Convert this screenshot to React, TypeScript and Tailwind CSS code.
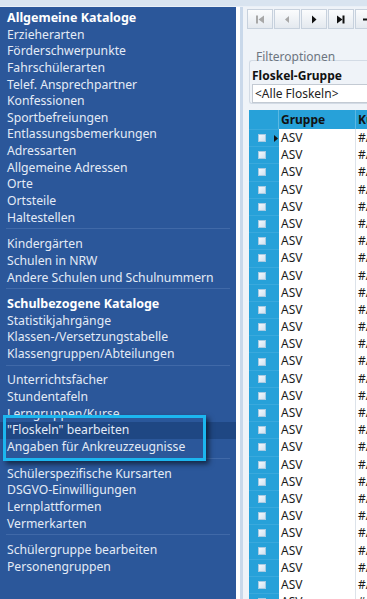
import React from 'react';

type Item = { t: string; b?: boolean; sel?: boolean };

const groups: Item[][] = [
  [
    { t: 'Allgemeine Kataloge', b: true },
    { t: 'Erzieherarten' },
    { t: 'Förderschwerpunkte' },
    { t: 'Fahrschülerarten' },
    { t: 'Telef. Ansprechpartner' },
    { t: 'Konfessionen' },
    { t: 'Sportbefreiungen' },
    { t: 'Entlassungsbemerkungen' },
    { t: 'Adressarten' },
    { t: 'Allgemeine Adressen' },
    { t: 'Orte' },
    { t: 'Ortsteile' },
    { t: 'Haltestellen' },
  ],
  [{ t: 'Kindergärten' }, { t: 'Schulen in NRW' }, { t: 'Andere Schulen und Schulnummern' }],
  [
    { t: 'Schulbezogene Kataloge', b: true },
    { t: 'Statistikjahrgänge' },
    { t: 'Klassen-/Versetzungstabelle' },
    { t: 'Klassengruppen/Abteilungen' },
  ],
  [
    { t: 'Unterrichtsfächer' },
    { t: 'Stundentafeln' },
    { t: 'Lerngruppen/Kurse' },
    { t: '"Floskeln" bearbeiten', sel: true },
    { t: 'Angaben für Ankreuzzeugnisse' },
  ],
  [
    { t: 'Schülerspezifische Kursarten' },
    { t: 'DSGVO-Einwilligungen' },
    { t: 'Lernplattformen' },
    { t: 'Vermerkarten' },
  ],
  [{ t: 'Schülergruppe bearbeiten' }, { t: 'Personengruppen' }],
];

function NavButton({ children }: { children: React.ReactNode }) {
  return (
    <div className="w-[26px] h-[20px] shrink-0 flex items-center justify-center border border-[#c7d1dd] bg-gradient-to-b from-[#fbfcfd] to-[#e4e9ef]">
      {children}
    </div>
  );
}

function Checkbox() {
  return <div className="w-[8px] h-[8px] border border-[#a9cbe3] bg-gradient-to-br from-[#f4f8fc] to-[#cfe2f1]" />;
}

export default function App() {
  const rows = Array.from({ length: 28 });
  return (
    <div
      className="w-[367px] h-[599px] overflow-hidden relative flex flex-col bg-[#eff3f8]"
      style={{ fontFamily: '"Noto Sans", "Open Sans", sans-serif' }}
    >
      <div className="h-[7px] shrink-0 bg-[#d9e4f0] border-b border-[#eaf0f7]" />
      <div className="flex flex-1 min-h-0">
        {/* left navigation */}
        <div className="w-[236px] shrink-0 bg-[#2b579a] pt-[3px] flex flex-col">
          {groups.map((g, gi) => (
            <React.Fragment key={gi}>
              {gi > 0 && <div className="mt-[2px] mb-[6.9px] mx-[6px] h-px bg-[#4069a8]" />}
              {g.map((it) => (
                <div
                  key={it.t}
                  className={
                    'h-[16.65px] leading-[16.65px] pl-[7px] whitespace-nowrap ' +
                    (it.b ? 'font-bold text-white text-[12.5px] ' : 'text-[#e4ebf6] text-[12.2px] ') +
                    (it.sel ? 'bg-[#1f4783]' : '')
                  }
                >
                  {it.t}
                </div>
              ))}
            </React.Fragment>
          ))}
        </div>
        <div className="w-[4px] shrink-0 bg-white" />
        <div className="w-[3px] shrink-0 bg-[#c9d8ea]" />
        {/* right panel */}
        <div className="flex-1 min-w-0 flex flex-col pl-[6px] bg-[#eff3f8]">
          <div className="flex gap-px pt-[2px] -ml-[2px]">
            <NavButton>
              <svg width="10" height="9" viewBox="0 0 10 9">
                <rect x="1" y="0.5" width="2" height="8" fill="#a8a8a8" />
                <path d="M9 0.5 L3.5 4.5 L9 8.5 Z" fill="#a8a8a8" />
              </svg>
            </NavButton>
            <NavButton>
              <svg width="6" height="9" viewBox="0 0 6 9">
                <path d="M5 1 L1 4.5 L5 8 Z" fill="#a8a8a8" />
              </svg>
            </NavButton>
            <NavButton>
              <svg width="6" height="9" viewBox="0 0 6 9">
                <path d="M1 0.5 L5.5 4.5 L1 8.5 Z" fill="#111" />
              </svg>
            </NavButton>
            <NavButton>
              <svg width="10" height="9" viewBox="0 0 10 9">
                <path d="M1 0.5 L6.5 4.5 L1 8.5 Z" fill="#111" />
                <rect x="6.5" y="0.5" width="2" height="8" fill="#111" />
              </svg>
            </NavButton>
            <NavButton>
              <svg width="12" height="9" viewBox="0 0 12 9">
                <rect x="1" y="3.5" width="10" height="2" fill="#111" />
              </svg>
            </NavButton>
          </div>
          {/* filter group */}
          <div className="relative mt-[31px] h-[46px] border border-r-0 border-[#d3dbe5] rounded-l-[3px] pl-[2px] pt-[7px]">
            <div className="absolute -top-[12px] left-[4px] px-[2px] text-[12px] leading-[16px] text-[#6d7580]">
              Filteroptionen
            </div>
            <div className="text-[12px] leading-[16px] font-bold text-[#111]">Floskel-Gruppe</div>
            <div className="h-[19px] bg-white border border-r-0 border-[#c3cad3] pl-[2px] text-[12px] leading-[17px] text-[#222] whitespace-nowrap">
              &lt;Alle Floskeln&gt;
            </div>
          </div>
          {/* grid */}
          <div className="mt-[6px] text-[12px] text-[#1a1a1a]">
            <div className="flex h-[19px] bg-[#27a1d9]">
              <div className="w-[30px] shrink-0 border-r border-[#5ab8e3]" />
              <div className="w-[77px] shrink-0 border-r border-[#5ab8e3] pl-[2px] font-bold text-[#111] leading-[19px]">
                Gruppe
              </div>
              <div className="flex-1 pl-[2px] font-bold text-[#111] leading-[19px] whitespace-nowrap">Kürzel</div>
            </div>
            {rows.map((_, i) => (
              <div key={i} className="flex h-[17.2px]">
                <div className="w-[30px] shrink-0 bg-[#27a1d9] border-t border-[#3aa9dd] flex items-center pl-[9px]">
                  <Checkbox />
                  {i === 0 && (
                    <svg className="ml-[8px]" width="4" height="7" viewBox="0 0 4 7">
                      <path d="M0 0 L4 3.5 L0 7 Z" fill="#111" />
                    </svg>
                  )}
                </div>
                <div className="w-[77px] shrink-0 bg-white border-r border-[#dde3ea] pl-[2px] leading-[17.2px]">
                  ASV
                </div>
                <div className="flex-1 bg-white pl-[2px] leading-[17.2px] whitespace-nowrap">#ASV</div>
              </div>
            ))}
          </div>
        </div>
      </div>
      {/* annotation highlight */}
      <div className="absolute left-[3px] top-[415px] w-[203px] h-[46px] border-[3px] border-[#1cb6ef] shadow-[3px_3px_5px_rgba(0,0,0,0.55)]" />
    </div>
  );
}
